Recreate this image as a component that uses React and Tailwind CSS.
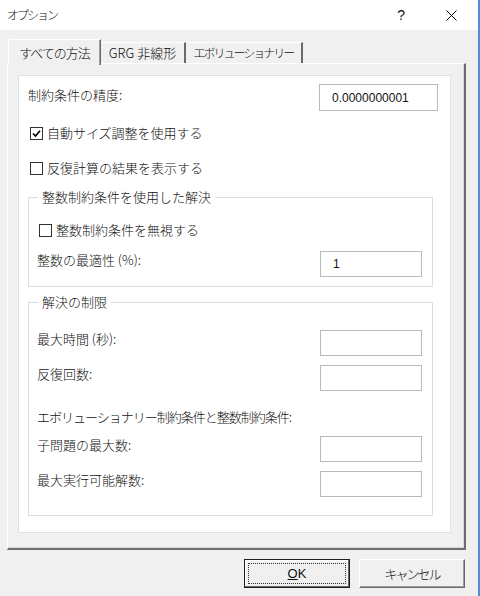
import React from 'react';

// ── Small pieces ──────────────────────────────────────────────────────────────

function CheckBox({ checked }) {
  return (
    <span className="w-[13px] h-[13px] border border-[#333] bg-white flex items-center justify-center shrink-0">
      {checked && (
        <svg width="11" height="11" viewBox="0 0 11 11">
          <path d="M2 5.5 L4.5 8 L9 2.8" fill="none" stroke="#000" strokeWidth="1.7" />
        </svg>
      )}
    </span>
  );
}

function TextBox({ value, w = 'w-[102px]', h = 'h-[26px]' }) {
  return (
    <div className={`${w} ${h} border border-[#b9b9b9] bg-white flex items-center pl-[12px] font-['Liberation_Sans',sans-serif] font-normal text-[12px] shrink-0`}>
      {value}
    </div>
  );
}

function Field({ label, value, className = '' }) {
  return (
    <div className={`flex justify-between items-start pl-[8px] pr-[10px] ${className}`}>
      <span className="leading-[17px]">{label}</span>
      <TextBox value={value} />
    </div>
  );
}

function Group({ title, className = '', children }) {
  return (
    <fieldset className={`ml-[9px] mr-[17px] border border-[#d5dfe5] ${className}`}>
      <legend className="ml-[9px] px-[4px] leading-[16px]">{title}</legend>
      {children}
    </fieldset>
  );
}

// ── Main ──────────────────────────────────────────────────────────────────────

export default function App() {
  return (
    <div className="w-[480px] h-[596px] bg-[#f0f0f0] border-r-2 border-[#4d8fd8] overflow-hidden text-[#111] text-[13px] font-light font-['Noto_Sans_CJK_JP','Liberation_Sans',sans-serif]">

      {/* title bar */}
      <div className="h-[30px] bg-white flex items-center pl-[7px] pr-[21px]">
        <span className="text-[12px] tracking-[-2px]">オプション</span>
        <span className="ml-auto mr-[41px] font-['Liberation_Sans',sans-serif] font-normal text-[14px] leading-none">?</span>
        <svg width="11" height="11" viewBox="0 0 11 11">
          <path d="M0.5 0.5 L10.5 10.5 M10.5 0.5 L0.5 10.5" stroke="#000" strokeWidth="1" />
        </svg>
      </div>

      {/* tabs */}
      <div className="pt-[9px]">
        <div className="ml-[8px] h-[24px] flex items-end">
          <div className="relative z-10 -mb-[2px] w-[93px] h-[26px] bg-[#f0f0f0] border-l border-t border-white border-r border-r-[#696969] rounded-tl-[2px] shadow-[inset_-1px_0_0_#a0a0a0] flex justify-center pt-[4px]">
            <span className="leading-[17px] tracking-[-1px]">すべての方法</span>
          </div>
          <div className="w-[85px] h-[21px] border-t border-white border-r-2 border-r-[#696969] flex items-center justify-center">
            GRG 非線形
          </div>
          <div className="w-[117px] h-[21px] border-t border-white border-r-2 border-r-[#696969] flex items-center justify-center">
            <span className="text-[12px] tracking-[-2px]">エボリューショナリー</span>
          </div>
        </div>

        {/* panel */}
        <div className="ml-[7px] w-[459px] h-[487px] border-l border-t border-white border-r-2 border-b-2 border-r-[#6d6d6d] border-b-[#6d6d6d] shadow-[inset_-1px_-1px_0_#d8d8d8] pt-[11px] pl-[10px]">
          <div className="w-[433px] h-[458px] bg-white border border-[#d9e2ea] flex flex-col">

            <div className="mt-[8px] flex justify-between items-start pl-[9px] pr-[12px]">
              <span className="leading-[17px] mt-[2px]">制約条件の精度:</span>
              <TextBox value="0.0000000001" w="w-[119px]" h="h-[27px]" />
            </div>

            <div className="mt-[12px] h-[20px] flex items-center gap-[4px] pl-[11px]">
              <CheckBox checked />
              <span>自動サイズ調整を使用する</span>
            </div>

            <div className="mt-[15px] h-[20px] flex items-center gap-[4px] pl-[11px]">
              <CheckBox />
              <span>反復計算の結果を表示する</span>
            </div>

            <Group title="整数制約条件を使用した解決" className="mt-[11px] pb-[9px]">
              <div className="mt-[15px] h-[20px] flex items-center gap-[4px] pl-[10px]">
                <CheckBox />
                <span>整数制約条件を無視する</span>
              </div>
              <Field className="mt-[11px]" label="整数の最適性 (%):" value="1" />
            </Group>

            <Group title="解決の制限" className="mt-[7px] pb-[18px]">
              <Field className="mt-[20px]" label="最大時間 (秒):" />
              <Field className="mt-[9px]" label="反復回数:" />
              <div className="mt-[17px] pl-[8px] leading-[17px] tracking-[-1px]">
                エボリューショナリー制約条件と整数制約条件:
              </div>
              <Field className="mt-[11px]" label="子問題の最大数:" />
              <Field className="mt-[9px]" label="最大実行可能解数:" />
            </Group>

          </div>
        </div>

        {/* buttons */}
        <div className="mt-[9px] flex justify-end gap-[9px] pr-[13px]">
          <button className="relative w-[106px] h-[29px] bg-[#f0f0f0] border border-[#1e1e1e] shadow-[inset_-1px_-1px_0_#696969,inset_1px_1px_0_#fff] font-['Liberation_Sans',sans-serif] font-normal text-[13px]">
            <span className="absolute inset-[3px] border border-dotted border-[#333]" />
            <span><span className="underline">O</span>K</span>
          </button>
          <button className="w-[106px] h-[29px] bg-[#f0f0f0] border-l border-t border-white border-r border-b border-r-[#696969] border-b-[#696969] shadow-[inset_-1px_-1px_0_#a0a0a0] text-[13px]">
            <span className="tracking-[-2px]">キャンセル</span>
          </button>
        </div>
      </div>
    </div>
  );
}
